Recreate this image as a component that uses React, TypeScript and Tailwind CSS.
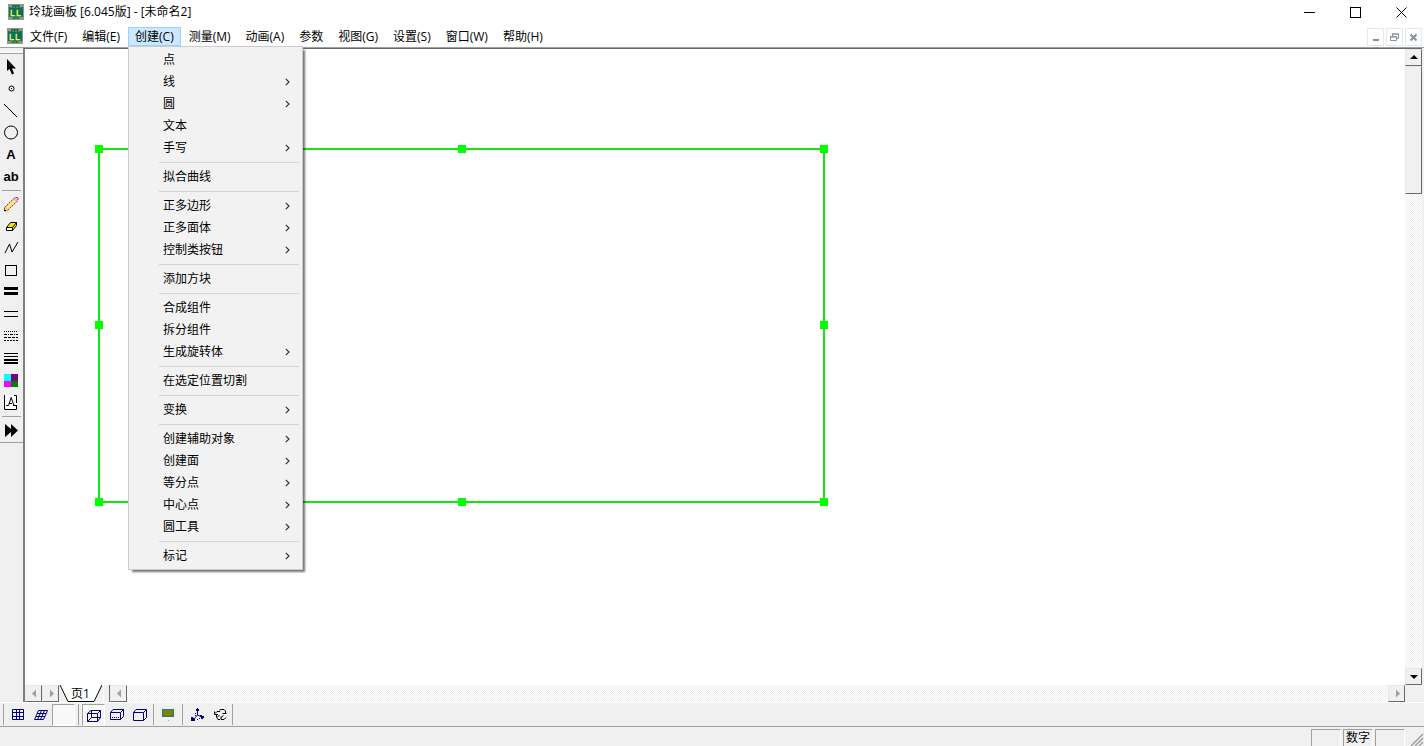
import React from 'react';

const Icon = ({ children, className = '' }: { children: React.ReactNode; className?: string }) => (
  <svg viewBox="0 0 16 16" width="16" height="16" fill="none" stroke="none" aria-hidden="true" className={`shrink-0 ${className}`}>
    {children}
  </svg>
);

const Logo = () => (
  <svg viewBox="0 0 16 16" width="16" height="16" aria-hidden="true" className="shrink-0">
    <rect width="16" height="16" fill="#96968a" />
    <path d="M1 3h3V1h8v2h3v10h-3v2H4v-2H1z" fill="#08705c" />
    <path d="M2 3h12M4 14h8" stroke="#a89a40" strokeDasharray="2 1" />
    <text x="2" y="12" fontSize="9" fontFamily="Liberation Sans, sans-serif" fill="#f4fa50" stroke="#f4fa50" strokeWidth="0.300">L</text>
    <text x="8" y="12" fontSize="9" fontFamily="Liberation Sans, sans-serif" fill="#f4fa50" stroke="#f4fa50" strokeWidth="0.300">L</text>
  </svg>
);

const menus = ['文件(F)', '编辑(E)', '创建(C)', '测量(M)', '动画(A)', '参数', '视图(G)', '设置(S)', '窗口(W)', '帮助(H)'];

// a trailing ">" marks an entry that opens a submenu
const createMenu = [
  ['点', '线>', '圆>', '文本', '手写>'],
  ['拟合曲线'],
  ['正多边形>', '正多面体>', '控制类按钮>'],
  ['添加方块'],
  ['合成组件', '拆分组件', '生成旋转体>'],
  ['在选定位置切割'],
  ['变换>'],
  ['创建辅助对象>', '创建面>', '等分点>', '中心点>', '圆工具>'],
  ['标记>'],
];

const CreateMenu = () => (
  <div role="menu" className="absolute left-0 top-full z-10 w-[175px] border border-[#ccc] bg-[#f2f2f2] py-[2px] shadow-[3px_3px_2px_-1px_rgba(0,0,0,0.55)]">
    {createMenu.map((group, i) => (
      <div key={i}>
        {i > 0 && <div className="ml-[30px] mr-[3px] flex h-[7px] items-center"><div className="h-px w-full bg-[#d4d4d4]" /></div>}
        {group.map((entry) => (
          <button key={entry} role="menuitem" className="flex h-[22px] w-full items-center justify-between pl-[34px] pr-[12px] text-left">
            <span>{entry.replace('>', '')}</span>
            {entry.endsWith('>') && (
              <svg width="5" height="8" viewBox="0 0 5 8" fill="none" stroke="#333" strokeWidth="1.2" aria-hidden="true">
                <path d="M0.8 0.8L4 4L0.8 7.2" />
              </svg>
            )}
          </button>
        ))}
      </div>
    ))}
  </div>
);

const drawTools = [
  { name: '选择', icon: <path d="M4 0V12L6.500 10L9 15.500L11 14.500L9 9.500H13Z" fill="#000" /> },
  { name: '点', icon: <><circle cx="8.500" cy="7.500" r="2.500" stroke="#000" /><rect x="8" y="7" width="1" height="1" fill="#000" /></> },
  { name: '线段', icon: <path d="M1 1L14 14" stroke="#000" /> },
  { name: '圆', icon: <circle cx="8" cy="7.500" r="6.500" stroke="#000" /> },
  { name: '文本', label: 'A' },
  { name: '标签', label: 'ab' },
];

const penTools = [
  {
    name: '铅笔',
    icon: (
      <>
        <path d="M2 11L10 3L13 6L5 14L1.500 15Z" fill="#fbd878" />
        <path d="M4 12L11.500 4.500" stroke="#fff8d8" />
        <path d="M10 3L12 1L15 3.500L13 6Z" fill="#c8c8d0" />
        <path d="M1.500 11.500L12 1.500H15V4.500L5 14L1.500 15Z" stroke="#a02a10" strokeDasharray="2 1" />
        <path d="M1 14h2v1H1z" fill="#000" />
      </>
    ),
  },
  {
    name: '橡皮',
    icon: (
      <>
        <path d="M3.500 9.500L7.500 4.500H13.500V7.500L9.500 12.500H3.500Z" fill="#f4ec00" stroke="#000" />
        <path d="M4 10h5v2H4z" fill="#fff" />
        <path d="M3.500 9.500H9.500L13.500 4.500M9.500 9.500V12.500" stroke="#000" />
      </>
    ),
  },
  { name: '折线', icon: <path d="M2 13L6.500 4L9 12L15 2" stroke="#000" /> },
  { name: '矩形', icon: <rect x="2.500" y="3.500" width="11" height="10" stroke="#000" /> },
  { name: '粗线', icon: <path d="M1 3h14v3H1zM1 8h14v3H1z" fill="#000" /> },
  { name: '细线', icon: <path d="M1 5h14v1H1zM1 10h14v1H1z" fill="#000" /> },
  {
    name: '虚线',
    icon: (
      <>
        <path d="M1 3.500h14" stroke="#000" strokeDasharray="1 1" />
        <path d="M1 6.500h14" stroke="#000" strokeDasharray="3 1 1 1" />
        <path d="M1 9.500h14" stroke="#000" strokeDasharray="3 1" />
        <path d="M1 12.500h14" stroke="#000" strokeDasharray="2 1" />
      </>
    ),
  },
  { name: '线宽', icon: <path d="M1 3h14v1H1zM1 6h14v1H1zM1 9h14v2H1zM1 12h14v2H1z" fill="#000" /> },
  {
    name: '颜色',
    icon: (
      <>
        <path d="M1 2h7v7H1z" fill="#0ff" />
        <path d="M8 2h7v7H8z" fill="#800080" />
        <path d="M1 9h7v6H1z" fill="#f0f" />
        <path d="M8 9h7v6H8z" fill="#008000" />
      </>
    ),
  },
  {
    name: '函数',
    icon: (
      <>
        <path d="M1 1h13v14H1z" fill="#fff" />
        <path d="M1.500 1V15.500H13.500V11M11 1.500h2.500V9M3 11.500h2.500L8 4M8 3L11 11.500M10 11.500h4M6 9.500h3" stroke="#000" />
      </>
    ),
  },
];

const ToolButton = ({ tool }: { tool: { name: string; icon?: React.ReactNode; label?: string } }) => (
  <button aria-label={tool.name} className="flex h-[22px] w-[22px] items-center justify-center font-['Liberation_Sans',sans-serif] text-[13px] leading-4 font-bold">
    {tool.label ? tool.label : <Icon>{tool.icon}</Icon>}
  </button>
);

const Toolbox = () => (
  <div role="toolbar" aria-label="绘图工具" className="flex w-[23px] shrink-0 flex-col bg-[#f0f0f0]">
    <div className="mt-[3px] mb-[2px] h-[3px] border-b border-[#a0a0a0] bg-[#fafafa]" />
    {drawTools.map((t) => <ToolButton key={t.name} tool={t} />)}
    <div className="mx-[2px] my-[2px] h-px bg-[#a0a0a0]" />
    {penTools.map((t) => <ToolButton key={t.name} tool={t} />)}
    <div className="mx-[2px] mt-[3px] mb-[2px] h-px bg-[#a0a0a0]" />
    <ToolButton tool={{ name: '更多', icon: <path d="M2 2V15L8 10V15L15 8.500L8 2V7Z" fill="#000" /> }} />
    <div className="mt-px h-px bg-[#a0a0a0]" />
  </div>
);

const arrows = {
  up: 'M4 8L8 4L12 8Z',
  down: 'M4 5L8 9L12 5Z',
  left: 'M10 2.500V10.500L6 6.500Z',
  right: 'M7 2.500V10.500L11 6.500Z',
};

const ScrollButton = ({ dir, disabled = false }: { dir: keyof typeof arrows; disabled?: boolean }) => (
  <button aria-label={dir} disabled={disabled} className="flex h-[17px] w-[17px] shrink-0 items-center justify-center border border-t-[#e8e8e8] border-r-[#696969] border-b-[#696969] border-l-[#e8e8e8] bg-[#f0f0f0]">
    <svg width="16" height="13" viewBox="0 0 16 13" aria-hidden="true" className="shrink-0"><path d={arrows[dir]} fill={disabled ? '#a0a0a0' : '#000'} /></svg>
  </button>
);

const track = 'bg-[repeating-conic-gradient(#fff_0_25%,#efefef_0_50%)] bg-[length:2px_2px]';

// handles sit on the corners and side midpoints of the 725 x 353 selection
const handles = [[0, 0], [363, 0], [725, 0], [0, 176], [725, 176], [0, 353], [363, 353], [725, 353]];

const Canvas = () => (
  <div className="relative min-w-0 flex-1 overflow-hidden bg-white">
    <svg className="absolute left-[70px] top-[96px]" width="733" height="361" aria-label="选定矩形">
      <rect x="4" y="4" width="725" height="353" fill="none" stroke="#14e414" strokeWidth="2" />
      {handles.map(([x, y]) => <rect key={`${x}-${y}`} x={x} y={y} width="8" height="8" fill="#0f0" />)}
    </svg>
  </div>
);

const PageTabs = () => (
  <div className="flex h-[17px] shrink-0">
    <ScrollButton dir="left" disabled />
    <ScrollButton dir="right" disabled />
    <button className="relative h-[17px] w-[43px] text-[12px] leading-[17px]">
      <svg className="absolute inset-0" width="43" height="17" viewBox="0 0 43 17" aria-hidden="true">
        <path d="M0 0L9 16.500H35L43 0Z" fill="#fff" />
        <path d="M1 0L9 16.500H35L43 0" fill="none" stroke="#000" />
      </svg>
      <span className="relative">页1</span>
    </button>
    <div className="ml-[1px] w-[7px] border-r border-l border-l-white border-r-[#696969] bg-[#f0f0f0]" />
    <ScrollButton dir="left" disabled />
    <div className={`flex-1 ${track}`} />
    <ScrollButton dir="right" disabled />
    <div className="w-[17px] bg-[#f0f0f0]" />
  </div>
);

const viewTools = [
  { name: '网格', icon: <path d="M2.500 2.500h11v10h-11zM6.500 2.500v10M9.500 2.500v10M2.500 5.500h11M2.500 9.500h11" stroke="#000080" /> },
  { name: '斜网格', icon: <path d="M5.500 3.500H14.500L10.500 12.500H1.500ZM8.500 3.500L4.500 12.500M11.500 3.500L7.500 12.500M4 6.500h9M3 9.500h9" stroke="#000080" /> },
  { name: '空白', icon: null, blank: true },
];

const solidTools = [
  { name: '线框', icon: <path d="M1.500 6.500h10v8h-10zM1.500 6.500L5 3.500H14.500L11.500 6.500M14.500 3.500V10.500L11.500 14.500M5.500 3.500V10.500H14.500M5.500 10.500L1.500 14.500" stroke="#000080" />, pressed: true },
  { name: '虚框', icon: <><path d="M1.500 5.500h10v7h-10zM1.500 5.500L4 2.500H14.500L11.500 5.500M14.500 2.500V9.500L11.500 12.500" stroke="#000080" /><path d="M3 10.500h9" stroke="#000080" strokeDasharray="1 1" /></> },
  { name: '实体', icon: <path d="M1.500 5.500h10v8h-10zM1.500 5.500L4 2.500H14.500L11.500 5.500M14.500 2.500V10.500L11.500 13.500" stroke="#000080" /> },
];

const boardTools = [
  { name: '黑板', icon: <><rect x="2.500" y="2.500" width="11" height="7" fill="#808000" stroke="#208080" /><path d="M8 13h1v1H8z" fill="#7c7" /></> },
];

const axisTools = [
  {
    name: '坐标轴',
    icon: (
      <>
        <path d="M7.500 2V8L4 12M7.500 8L12 10" stroke="#000080" />
        <path d="M7 1h1v1h1v2H6V2h1zM1 13V10h2v1h1v1h1v2H1zM10 8h2v1h2v2h-1v1h-2v-2h-1z" fill="#000080" />
        <path d="M5 8.500h1M5 6.500h1M9 11.500h1M7 12.500h1" stroke="#000080" />
      </>
    ),
  },
  {
    name: '旋转',
    icon: <path d="M1.500 4.500V7.500H5M2 6.500L4 4.500H7M6.500 3L9 2.500H11L12.500 4V7M9.500 6.500H13.500M3.500 8V10L5 12.500H7M6.500 8L4.500 10M8 9.500V12.500H11L13 10.500M8 10.500L10.500 8.500" stroke="#000" />,
  },
];

type BarTool = { name: string; icon: React.ReactNode; pressed?: boolean; blank?: boolean };

const BarGroup = ({ tools }: { tools: BarTool[] }) => (
  <>
    {tools.map((t) => (
      <button
        key={t.name}
        aria-label={t.name}
        aria-pressed={t.pressed}
        className={`flex h-[22px] w-[23px] items-center justify-center ${t.pressed || t.blank ? 'border border-t-[#a0a0a0] border-r-white border-b-white border-l-[#a0a0a0] bg-[#f8f8f8]' : ''}`}
      >
        {t.icon && <Icon>{t.icon}</Icon>}
      </button>
    ))}
  </>
);

const BarSep = () => <div className="mx-[3px] h-[21px] w-px bg-[#a0a0a0]" />;

const ViewBar = () => (
  <div role="toolbar" aria-label="视图工具" className="flex h-[24px] shrink-0 items-center border-t border-white bg-[#f0f0f0]">
    <div className="mr-[2px] ml-[3px] h-[21px] w-px bg-[#a0a0a0]" />
    <BarGroup tools={viewTools} />
    <BarSep />
    <BarGroup tools={solidTools} />
    <div className="mx-[2px] h-[21px] w-px bg-[#a0a0a0]" />
    <BarGroup tools={boardTools} />
    <BarSep />
    <BarGroup tools={axisTools} />
    <div className="h-[21px] w-px bg-[#a0a0a0]" />
  </div>
);

const StatusBar = () => {
  const pane = 'h-[17px] w-[30px] border border-t-[#a0a0a0] border-r-white border-b-0 border-l-[#a0a0a0] text-center leading-[16px] whitespace-nowrap';
  return (
    <footer className="flex h-[20px] shrink-0 items-end justify-end gap-[2px] border-t border-[#a0a0a0] bg-[#f0f0f0]">
      <div className={pane} />
      <div className={pane}>数字</div>
      <div className={pane} />
      <svg width="17" height="14" viewBox="0 0 17 14" aria-hidden="true" className="shrink-0">
        <path d="M4 14L16 2M8 14L16 6M12 14L16 10" stroke="#a0a0a0" strokeWidth="1.500" />
      </svg>
    </footer>
  );
};

const App: React.FC = () => {
  const mdi = 'flex h-[18px] w-[17px] items-center justify-center border border-[#e8e8e8]';
  return (
    <div className="flex h-screen flex-col overflow-hidden bg-white font-['Open_Sans','Noto_Sans_CJK_SC',sans-serif] text-[12px] leading-4 text-black">
      <header className="flex h-[24px] shrink-0 items-center pl-2">
        <Logo />
        <h1 className="ml-[5px] flex-1">玲珑画板 [6.045版] - [未命名2]</h1>
        <button aria-label="最小化" className="flex h-full w-[45px] items-center justify-center">
          <svg width="11" height="11" aria-hidden="true"><path d="M0 5.500h11" stroke="#000" /></svg>
        </button>
        <button aria-label="最大化" className="flex h-full w-[46px] items-center justify-center">
          <svg width="11" height="11" aria-hidden="true"><rect x="0.500" y="0.500" width="10" height="10" fill="none" stroke="#000" /></svg>
        </button>
        <button aria-label="关闭" className="flex h-full w-[46px] items-center justify-center">
          <svg width="11" height="11" aria-hidden="true"><path d="M0.500 0.500l10 10M10.500 0.500l-10 10" stroke="#000" /></svg>
        </button>
      </header>

      <div className="flex h-[23px] shrink-0 items-center pl-[7px]">
        <Logo />
        <nav className="mt-[2px] flex gap-px">
          {menus.map((m) => (
            <div key={m} className="relative">
              <button className={`block h-[19px] border px-[6px] leading-[17px] whitespace-nowrap ${m === '创建(C)' ? 'border-[#99d1ff] bg-[#cce8ff]' : 'border-transparent'}`}>{m}</button>
              {m === '创建(C)' && <CreateMenu />}
            </div>
          ))}
        </nav>
        <div className="mt-[3px] mr-[2px] ml-auto flex gap-[2px]">
          <button aria-label="最小化文档" className={mdi}>
            <svg width="9" height="9" aria-hidden="true"><path d="M2 7h6" stroke="#84909e" strokeWidth="2" /></svg>
          </button>
          <button aria-label="还原文档" className={mdi}>
            <svg width="9" height="9" fill="none" stroke="#84909e" aria-hidden="true"><path d="M2.500 3V1H8.500V5.500H6.500M2 1h7M0.500 3.500h6v4h-6zM0 4h7" /></svg>
          </button>
          <button aria-label="关闭文档" className={mdi}>
            <svg width="9" height="9" aria-hidden="true"><path d="M1.500 1.500l6 6M7.500 1.500l-6 6" stroke="#84909e" strokeWidth="2" /></svg>
          </button>
        </div>
      </div>

      <main className="flex min-h-0 flex-1 border-t border-[#a0a0a0] bg-[#f0f0f0]">
        <Toolbox />
        <div className="mr-[2px] flex min-w-0 flex-1 flex-col border-t border-l-2 border-t-[#696969] border-l-[#808080]">
          <div className="flex min-h-0 flex-1">
            <Canvas />
            <div className={`flex w-[17px] shrink-0 flex-col ${track}`}>
              <ScrollButton dir="up" />
              <div className="h-[128px] border border-t-[#e8e8e8] border-r-[#696969] border-b-[#696969] border-l-[#e8e8e8] bg-[#f0f0f0]" />
              <div className="flex-1" />
              <ScrollButton dir="down" />
            </div>
          </div>
          <PageTabs />
        </div>
      </main>

      <ViewBar />
      <StatusBar />
    </div>
  );
};

export default App;
